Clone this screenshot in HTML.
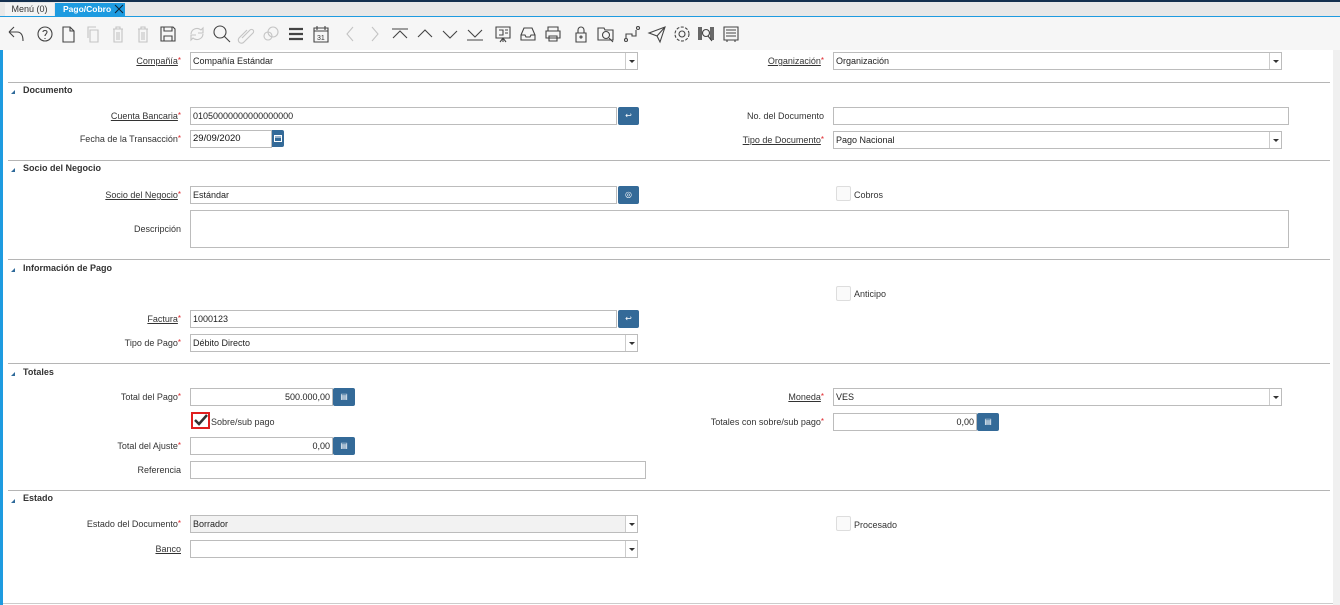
<!DOCTYPE html>
<html><head><meta charset="utf-8">
<style>
*{box-sizing:border-box;margin:0;padding:0}
body{width:1340px;height:605px;overflow:hidden;background:#fff;font-family:"Liberation Sans",sans-serif;font-size:9px;color:#333;position:relative}
.a{position:absolute}
.lbl{position:absolute;text-align:right;white-space:nowrap;font-size:9px;color:#333}
.lbl u{text-decoration:underline}
.req{color:#e0262b;font-size:8px;vertical-align:top}
.f{position:absolute;height:18px;border:1px solid #bcbcbc;background:#fff;padding:0 2px;line-height:16px;font-size:9px;color:#222;white-space:nowrap}
.dd{position:absolute;right:0;top:0;width:12px;height:16px;border-left:1px solid #ccc;background:#fff}
.dd:after{content:"";position:absolute;left:3px;top:7px;border-left:3px solid transparent;border-right:3px solid transparent;border-top:3px solid #333}
.btn{position:absolute;height:18px;background:#346a98;border-radius:2px;color:#fff;font-size:8px;text-align:center;line-height:18px}
.sep{position:absolute;left:8px;width:1322px;height:1px;background:#b5b5b5}
.hd{position:absolute;left:23px;font-weight:bold;font-size:9px;color:#333}
.tri{position:absolute;left:11px;width:0;height:0;border-left:4px solid transparent;border-bottom:4px solid #2f6a9a}
.cb{position:absolute;width:15px;height:15px;border:1px solid #ddd;background:#fafafa;border-radius:2px}
svg.i{position:absolute;top:24px;width:20px;height:20px;fill:none;stroke:#444;stroke-width:1.1}
svg.g{stroke:#c4c4c4}
</style></head><body>
<div class="a" style="left:0;top:0;width:1340px;height:2px;background:#14304f"></div>
<div class="a" style="left:0;top:2px;width:1340px;height:15px;background:#e8e8e8"></div>
<div class="a" style="left:5px;top:3px;width:49px;height:13px;background:#f3f3f3;color:#333;line-height:13px;text-align:center">Menú (0)</div>
<div class="a" style="left:55px;top:3px;width:70px;height:14px;background:#1e9be0;color:#fff;font-weight:bold;line-height:13px;padding-left:8px;white-space:nowrap;font-size:8.5px">Pago/Cobro</div>
<svg class="a" style="left:114px;top:4px" width="10" height="10" viewBox="0 0 10 10"><path d="M1 1l8 8M9 1l-8 8" stroke="#123" stroke-width="1"/></svg>
<div class="a" style="left:0;top:16px;width:1340px;height:1px;background:#1e9be0"></div>
<div class="a" style="left:0;top:17px;width:1340px;height:33px;background:#f6f6f6"></div>
<!-- toolbar icons -->
<svg class="i" style="left:6px" viewBox="0 0 20 20"><path d="M3 8l5-5M3 8l5 5M3 8h8c4 0 6 3 6 9"/></svg>
<svg class="i" style="left:35px" viewBox="0 0 20 20"><circle cx="10" cy="10" r="7"/><path d="M8 8c0-2 4-2 4 0s-2 2-2 4M10 14v1"/></svg>
<svg class="i" style="left:58px" viewBox="0 0 20 20"><path d="M5 3h7l4 4v11H5zM12 3v4h4"/></svg>
<svg class="i g" style="left:83px" viewBox="0 0 20 20"><path d="M7 6h8v12H7zM5 14V3h8"/></svg>
<svg class="i g" style="left:108px" viewBox="0 0 20 20"><path d="M5 5h10M8 5V3h4v2M6 5v13h8V5M9 8v8M11 8v8"/></svg>
<svg class="i g" style="left:133px" viewBox="0 0 20 20"><path d="M5 5h10M8 5V3h4v2M6 5v13h8V5M9 8v8M11 8v8"/></svg>
<svg class="i" style="left:158px" viewBox="0 0 20 20"><path d="M3 3h12l2 2v12H3zM6 3v4h8V3M6 17v-5h8v5"/></svg>
<svg class="i g" style="left:187px" viewBox="0 0 20 20"><path d="M4 10a6 6 0 0 1 10-4l2-2v5h-5M16 10a6 6 0 0 1-10 4l-2 2v-5h5"/></svg>
<svg class="i" style="left:212px" viewBox="0 0 20 20"><circle cx="8" cy="8" r="6"/><path d="M12 12l6 6"/></svg>
<svg class="i g" style="left:236px" viewBox="0 0 20 20"><path d="M6 14l8-8a2 2 0 0 1 3 3l-9 9a3 3 0 0 1-5-4l8-8"/></svg>
<svg class="i g" style="left:261px" viewBox="0 0 20 20"><circle cx="12" cy="8" r="5"/><circle cx="7" cy="12" r="4"/></svg>
<svg class="i" style="left:286px;stroke-width:2.2" viewBox="0 0 20 20"><path d="M3 5h14M3 10h14M3 15h14"/></svg>
<svg class="i" style="left:311px" viewBox="0 0 20 20"><path d="M3 4h14v14H3zM3 7h14M6 2v4M14 2v4"/><text x="6" y="16" font-size="7" fill="#333" stroke="none" font-family="Liberation Sans">31</text></svg>
<svg class="i g" style="left:340px" viewBox="0 0 20 20"><path d="M13 3l-6 7 6 7"/></svg>
<svg class="i g" style="left:365px" viewBox="0 0 20 20"><path d="M7 3l6 7-6 7"/></svg>
<svg class="i" style="left:390px" viewBox="0 0 20 20"><path d="M2 5h16M3 14l7-7 7 7"/></svg>
<svg class="i" style="left:415px" viewBox="0 0 20 20"><path d="M3 13l7-7 7 7"/></svg>
<svg class="i" style="left:440px" viewBox="0 0 20 20"><path d="M3 7l7 7 7-7"/></svg>
<svg class="i" style="left:465px" viewBox="0 0 20 20"><path d="M2 16h16M3 6l7 7 7-7"/></svg>
<svg class="i" style="left:493px" viewBox="0 0 20 20"><path d="M3 3h14v11H3zM6 6h4v5H6M12 6h3M12 9h3M10 14v4M7 18l3-4 3 4"/></svg>
<svg class="i" style="left:518px" viewBox="0 0 20 20"><path d="M3 11l3-7h8l3 7v5H3zM3 11h4l1 2h4l1-2h4"/></svg>
<svg class="i" style="left:543px" viewBox="0 0 20 20"><path d="M5 7V3h10v4M3 7h14v7H3zM6 12h8v5H6z"/></svg>
<svg class="i" style="left:571px" viewBox="0 0 20 20"><path d="M5 9h10v9H5zM7 9V6a3 3 0 0 1 6 0v3"/><circle cx="10" cy="13" r="1"/></svg>
<svg class="i" style="left:596px" viewBox="0 0 20 20"><path d="M2 4h6l1 2h8v10H2z"/><circle cx="10" cy="11" r="3.5"/><path d="M13 14l4 4"/></svg>
<svg class="i" style="left:622px" viewBox="0 0 20 20"><circle cx="4" cy="16" r="1.5"/><circle cx="16" cy="4" r="1.5"/><path d="M4 14v-4h6v2h4V6"/></svg>
<svg class="i" style="left:647px" viewBox="0 0 20 20"><path d="M2 9l16-6-5 15-3-6zM10 12l8-9"/></svg>
<svg class="i" style="left:672px" viewBox="0 0 20 20"><circle cx="10" cy="10" r="3"/><circle cx="10" cy="10" r="7" stroke-dasharray="3 1.5"/></svg>
<svg class="i" style="left:696px" viewBox="0 0 20 20"><path d="M3 3v13M5 3v13M15 3v13M17 3v13" stroke-width="1.6"/><circle cx="10" cy="9" r="3.5"/><path d="M12 12l4 5"/></svg>
<svg class="i" style="left:721px" viewBox="0 0 20 20"><path d="M3 3h14v13H3zM5 6h10M5 9h10M5 12h10M6 16v2M14 16v2"/></svg>

<div class="a" style="left:0;top:50px;width:3px;height:555px;background:#1e9be0"></div>
<div class="a" style="left:1333px;top:50px;width:7px;height:555px;background:#f0f0f0"></div>

<div class="lbl" style="right:1159px;top:56px"><u>Compañía</u><span class="req">*</span></div>
<div class="f" style="left:190px;top:52px;width:448px">Compañía Estándar<div class="dd"></div></div>
<div class="lbl" style="right:516px;top:56px"><u>Organización</u><span class="req">*</span></div>
<div class="f" style="left:833px;top:52px;width:449px">Organización<div class="dd"></div></div>

<div class="sep" style="top:82px"></div>
<div class="tri" style="top:90px"></div><div class="hd" style="top:85px">Documento</div>

<div class="lbl" style="right:1159px;top:111px"><u>Cuenta Bancaria</u><span class="req">*</span></div>
<div class="f" style="left:190px;top:107px;width:427px">01050000000000000000</div>
<div class="btn" style="left:618px;top:107px;width:21px">↩</div>
<div class="lbl" style="right:516px;top:111px">No. del Documento</div>
<div class="f" style="left:833px;top:107px;width:456px"></div>

<div class="lbl" style="right:1159px;top:134px">Fecha de la Transacción<span class="req">*</span></div>
<div class="f" style="left:190px;top:130px;width:82px;font-size:9.5px;color:#111">29/09/2020</div>
<div class="btn" style="left:272px;top:130px;width:12px;height:17px;border-radius:0 2px 2px 0"></div>
<svg class="a" style="left:274px;top:134px" width="8" height="8" viewBox="0 0 8 8"><path d="M0.5 1.5h7v6h-7zM0.5 3h7" fill="none" stroke="#fff" stroke-width="1"/></svg>
<div class="lbl" style="right:516px;top:135px"><u>Tipo de Documento</u><span class="req">*</span></div>
<div class="f" style="left:833px;top:131px;width:449px">Pago Nacional<div class="dd"></div></div>

<div class="sep" style="top:160px"></div>
<div class="tri" style="top:168px"></div><div class="hd" style="top:163px">Socio del Negocio</div>

<div class="lbl" style="right:1159px;top:190px"><u>Socio del Negocio</u><span class="req">*</span></div>
<div class="f" style="left:190px;top:186px;width:427px">Estándar</div>
<div class="btn" style="left:618px;top:186px;width:21px">◎</div>
<div class="cb" style="left:836px;top:186px"></div>
<div class="lbl" style="left:854px;top:190px;text-align:left">Cobros</div>

<div class="lbl" style="right:1159px;top:224px">Descripción</div>
<div class="f" style="left:190px;top:210px;width:1099px;height:38px"></div>

<div class="sep" style="top:259px"></div>
<div class="tri" style="top:268px"></div><div class="hd" style="top:263px">Información de Pago</div>

<div class="cb" style="left:836px;top:286px"></div>
<div class="lbl" style="left:854px;top:289px;text-align:left">Anticipo</div>

<div class="lbl" style="right:1159px;top:314px"><u>Factura</u><span class="req">*</span></div>
<div class="f" style="left:190px;top:310px;width:427px">1000123</div>
<div class="btn" style="left:618px;top:310px;width:21px">↩</div>

<div class="lbl" style="right:1159px;top:338px">Tipo de Pago<span class="req">*</span></div>
<div class="f" style="left:190px;top:334px;width:448px">Débito Directo<div class="dd"></div></div>

<div class="sep" style="top:363px"></div>
<div class="tri" style="top:372px"></div><div class="hd" style="top:367px">Totales</div>

<div class="lbl" style="right:1159px;top:392px">Total del Pago<span class="req">*</span></div>
<div class="f" style="left:190px;top:388px;width:143px;text-align:right">500.000,00</div>
<div class="btn" style="left:333px;top:388px;width:22px">▤</div>
<div class="lbl" style="right:516px;top:392px"><u>Moneda</u><span class="req">*</span></div>
<div class="f" style="left:833px;top:388px;width:449px">VES<div class="dd"></div></div>

<div class="a" style="left:191px;top:412px;width:19px;height:17px;border:2px solid #e01e1e"></div>
<svg class="a" style="left:193px;top:413px" width="15" height="14" viewBox="0 0 15 14"><path d="M2 7l4 4 8-9" fill="none" stroke="#333" stroke-width="2.5"/></svg>
<div class="lbl" style="left:211px;top:417px;text-align:left">Sobre/sub pago</div>
<div class="lbl" style="right:516px;top:417px">Totales con sobre/sub pago<span class="req">*</span></div>
<div class="f" style="left:833px;top:413px;width:144px;text-align:right">0,00</div>
<div class="btn" style="left:977px;top:413px;width:22px">▤</div>

<div class="lbl" style="right:1159px;top:441px">Total del Ajuste<span class="req">*</span></div>
<div class="f" style="left:190px;top:437px;width:143px;text-align:right">0,00</div>
<div class="btn" style="left:333px;top:437px;width:22px">▤</div>

<div class="lbl" style="right:1159px;top:465px">Referencia</div>
<div class="f" style="left:190px;top:461px;width:456px"></div>

<div class="sep" style="top:490px"></div>
<div class="tri" style="top:499px"></div><div class="hd" style="top:493px">Estado</div>

<div class="lbl" style="right:1159px;top:519px">Estado del Documento<span class="req">*</span></div>
<div class="f" style="left:190px;top:515px;width:448px;background:#f2f2f2">Borrador<div class="dd"></div></div>
<div class="cb" style="left:836px;top:516px"></div>
<div class="lbl" style="left:854px;top:520px;text-align:left">Procesado</div>

<div class="lbl" style="right:1159px;top:544px"><u>Banco</u></div>
<div class="f" style="left:190px;top:540px;width:448px"><div class="dd"></div></div>

<div class="a" style="left:3px;top:603px;width:1330px;height:1px;background:#ccc"></div>
</body></html>
